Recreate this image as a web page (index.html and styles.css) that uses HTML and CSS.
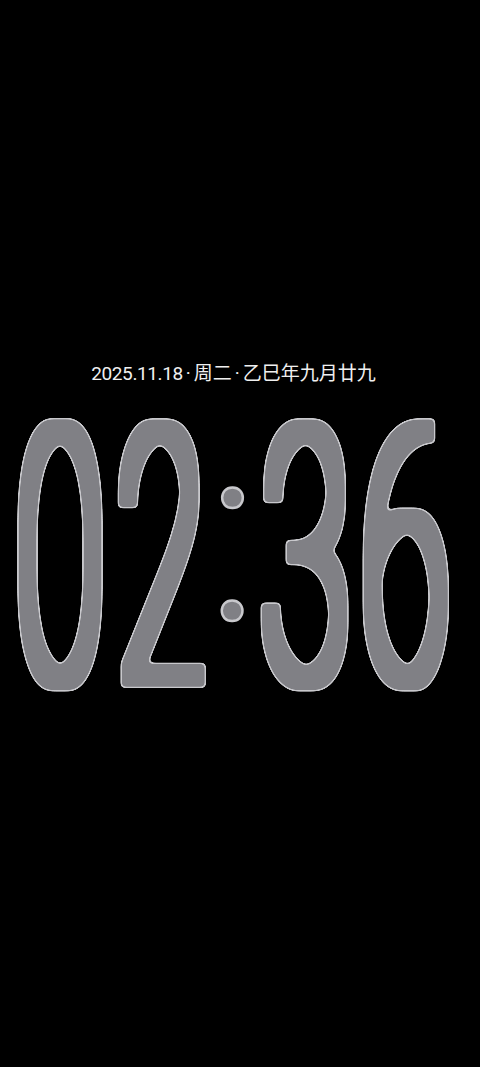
FILE: index.html
```html
<!DOCTYPE html>
<html lang="zh">
<head>
<meta charset="utf-8">
<link rel="stylesheet" href="styles.css">
</head>
<body>
<main class="screen">
  <div class="date"><span class="num">2025.11.18</span><span class="sep">·</span><span>周二</span><span class="sep">·</span><span>乙巳年九月廿九</span></div>
  <svg class="clock" width="480" height="300" viewBox="0 0 480 300">
    <defs>
      <filter id="thick" filterUnits="userSpaceOnUse" x="0" y="0" width="480" height="300" color-interpolation-filters="sRGB">
        <feMorphology in="SourceAlpha" operator="dilate" radius="8" result="grown"/>
        <feGaussianBlur in="grown" stdDeviation="2.5" result="soft"/>
        <feComponentTransfer in="soft" result="outer">
          <feFuncA type="linear" slope="12" intercept="-5.26"/>
        </feComponentTransfer>
        <feComponentTransfer in="soft" result="inner">
          <feFuncA type="linear" slope="12" intercept="-7.9"/>
        </feComponentTransfer>
        <feFlood flood-color="#c8c8cc" result="edgeColor"/>
        <feComposite in="edgeColor" in2="outer" operator="in" result="edge"/>
        <feFlood flood-color="#808085" result="bodyColor"/>
        <feComposite in="bodyColor" in2="inner" operator="in" result="body"/>
        <feMerge>
          <feMergeNode in="edge"/>
          <feMergeNode in="body"/>
        </feMerge>
      </filter>
    </defs>
    <g class="digits" filter="url(#thick)">
      <text transform="translate(60,280) scale(1,2.16)">0</text>
      <text transform="translate(161,280) scale(1,2.16)">2</text>
      <text transform="translate(305,280) scale(1,2.16)">3</text>
      <text transform="translate(405,280) scale(1,2.16)">6</text>
    </g>
    <text class="colon" x="232.5" y="220">:</text>
  </svg>
</main>
</body>
</html>
```
FILE: styles.css
```css
html, body {
  margin: 0;
  padding: 0;
  background: #000;
}
.screen {
  width: 480px;
  height: 1067px;
  display: flex;
  flex-direction: column;
  align-items: center;
  padding-top: 362px;
  box-sizing: border-box;
}
.date {
  color: #f0f0f0;
  font-family: Roboto, "Noto Sans CJK SC", sans-serif;
  font-size: 19px;
  line-height: 24px;
  display: flex;
  align-items: center;
  margin-right: 13px;
}
.date .num {
  letter-spacing: -0.4px;
}
.date .sep {
  margin: 0 3px;
}
.clock {
  display: block;
  margin-top: 14px;
}
.digits text {
  font-family: Roboto, sans-serif;
  font-weight: 100;
  font-size: 163px;
  text-anchor: middle;
  fill: #fff;
}
.clock .colon {
  font-family: Roboto, sans-serif;
  font-size: 250px;
  font-weight: 300;
  text-anchor: middle;
  fill: #808085;
  stroke: #c8c8cc;
  stroke-width: 2.4px;
}
```
